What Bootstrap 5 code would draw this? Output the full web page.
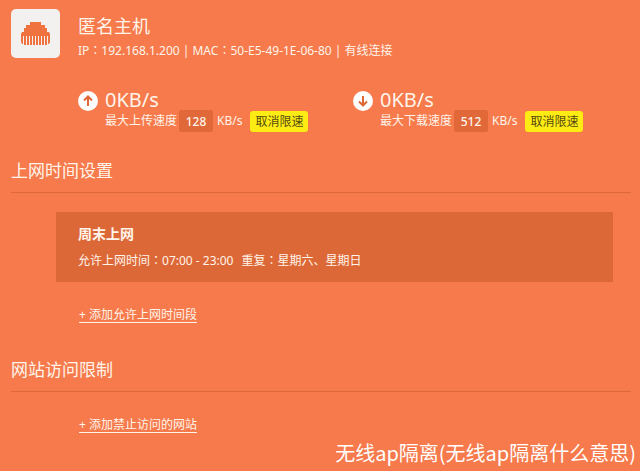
<!DOCTYPE html>
<html lang="zh-CN">
<head>
<meta charset="utf-8">
<meta name="viewport" content="width=device-width, initial-scale=1">
<title>匿名主机</title>
<link href="https://cdn.jsdelivr.net/npm/bootstrap@5.3.0/dist/css/bootstrap.min.css" rel="stylesheet">
<style>
  body {
    background: #f67a4b;
    color: #fff4ea;
    font: 12px/16px "Noto Sans", "Noto Sans CJK SC", sans-serif;
  }
  .page { padding: 9px 9px 0 11px; }
  .colon { font-family: "Noto Sans CJK TC", sans-serif; line-height: 1; }
  .host-icon { width: 49px; height: 49px; border-radius: 5px; background: #f2f1f0; }
  .host-text { padding: 5px 0 0 18px; }
  .title { font-size: 18px; line-height: 24px; font-weight: 400; margin: 0; }
  .host-text p { margin-top: 5px; }
  .speeds { padding: 31px 3px 0 67px; }
  .arrow { width: 20px; height: 20px; margin-top: 1px; }
  .speed-body { margin-left: 7px; }
  .rate { font-size: 20px; line-height: 20px; }
  .limit { height: 22px; }
  .limit input {
    width: 34px; height: 22px; border: 0; border-radius: 2px; padding: 0;
    margin: 0 4px 0 2px; background: #e16839; color: inherit; text-align: center; font-weight: 500;
  }
  .limit .btn {
    width: 58px; height: 21px; margin-left: 8px; padding: 0; border: 0; border-radius: 3px;
    background: #fdec14; color: #554a10; font-size: 12px; line-height: 21px;
  }
  .section-head { font-size: 17px; border-bottom: 1px solid #dc683c; padding-bottom: 9px; }
  .time-head { margin-top: 27px; }
  .period { background: #dd6837; margin: 19px 18px 0 45px; padding: 12px 22px 13px; }
  .period h3 { font-size: 14px; line-height: 20px; font-weight: 700; margin: 0 0 9px; }
  .add { padding-left: 68px; margin-top: 26px; }
  .add a { color: inherit; text-decoration: none; border-bottom: 1px solid #fff4ea; line-height: 14px; }
  .site-head { margin-top: 35px; }
  .caption { font: 20px/28px "Noto Sans CJK SC", sans-serif; color: #fff; padding: 6px 4px 0 0; }
</style>
</head>
<body>
<main class="page">
  <header class="d-flex">
    <div class="host-icon flex-shrink-0">
      <svg width="49" height="49" viewBox="0 0 49 49" aria-hidden="true">
        <path fill="#f0723f" d="M19 13h11v3h4v3h2v4h2l1 2v8l-1 2h-1v-8h-1v9h-2v-9h-1v9h-2v-9h-1v9h-2v-9h-1v9h-2v-9h-1v9h-2v-9h-1v9h-2v-9h-1v9h-2v-9h-1v9h-2v-9h-1v8h-1l-1-2v-8l1-2h2v-4h2v-3h4z"/>
      </svg>
    </div>
    <div class="host-text">
      <h1 class="title">匿名主机</h1>
      <p class="mb-0">IP<span class="colon" lang="zh-TW">：</span>192.168.1.200 | MAC<span class="colon" lang="zh-TW">：</span>50-E5-49-1E-06-80 | 有线连接</p>
    </div>
  </header>

  <section class="speeds row g-0">
    <div class="col-6 d-flex">
      <svg class="arrow flex-shrink-0" viewBox="0 0 20 20" aria-hidden="true"><circle cx="10" cy="10" r="10" fill="#fff"/><path d="M10 15V6M6 9.500l4-4 4 4" fill="none" stroke="#dd6837" stroke-width="2"/></svg>
      <div class="speed-body">
        <div class="rate">0KB/s</div>
        <div class="limit d-flex align-items-center text-nowrap">
          <label for="up">最大上传速度</label><input id="up" type="text" value="128">
          <span>KB/s</span><button type="button" class="btn">取消限速</button>
        </div>
      </div>
    </div>
    <div class="col-6 d-flex">
      <svg class="arrow flex-shrink-0" viewBox="0 0 20 20" aria-hidden="true"><circle cx="10" cy="10" r="10" fill="#fff"/><path d="M10 5v9M6 10.500l4 4 4-4" fill="none" stroke="#dd6837" stroke-width="2"/></svg>
      <div class="speed-body">
        <div class="rate">0KB/s</div>
        <div class="limit d-flex align-items-center text-nowrap">
          <label for="down">最大下载速度</label><input id="down" type="text" value="512">
          <span>KB/s</span><button type="button" class="btn">取消限速</button>
        </div>
      </div>
    </div>
  </section>

  <section>
    <h2 class="title section-head time-head">上网时间设置</h2>
    <div class="period">
      <h3>周末上网</h3>
      <div class="d-flex flex-wrap">
        <span class="me-2">允许上网时间<span class="colon" lang="zh-TW">：</span>07:00 - 23:00</span>
        <span>重复<span class="colon" lang="zh-TW">：</span>星期六、星期日</span>
      </div>
    </div>
    <div class="add d-flex"><a href="#">+ 添加允许上网时间段</a></div>
  </section>

  <section>
    <h2 class="title section-head site-head">网站访问限制</h2>
    <div class="add d-flex"><a href="#">+ 添加禁止访问的网站</a></div>
  </section>
</main>
<footer class="caption text-end">无线ap隔离(无线ap隔离什么意思)</footer>
<script src="https://cdn.jsdelivr.net/npm/bootstrap@5.3.0/dist/js/bootstrap.bundle.min.js"></script>
</body>
</html>
